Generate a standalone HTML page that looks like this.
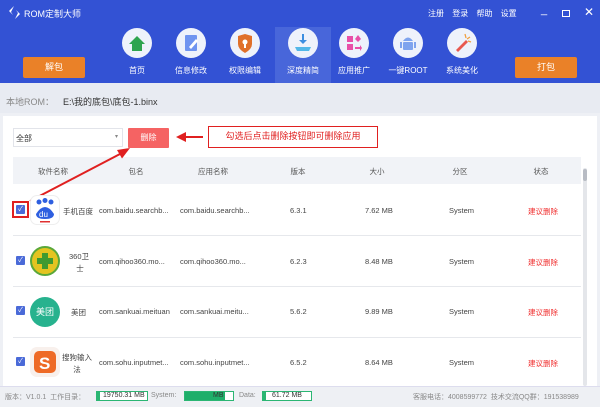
<!DOCTYPE html>
<html><head><meta charset="utf-8"><style>
*{margin:0;padding:0;box-sizing:border-box}
body{width:600px;height:407px;overflow:hidden;font-family:"Liberation Sans","Noto Sans CJK SC",sans-serif;font-size:8px;color:#333;background:#eef0f5;position:relative}
.a{position:absolute}
.hdr{left:0;top:0;width:600px;height:83px;background:#3352d4}
.nav{width:54px;text-align:center;color:#fff;font-size:8px}
.nav .c{width:30px;height:30px;border-radius:50%;background:#eef2fb;margin:0 auto 7px;position:relative;overflow:hidden}
.btn{background:#ea8128;color:#fff;text-align:center;border-radius:2px;font-size:9px}
.th{color:#555;font-size:7.5px;text-align:center}
.cell{font-size:7.5px;color:#444;white-space:nowrap}
.cb{width:9px;height:9px;background:#4a6ad8;border-radius:1px;color:#fff;font-size:7px;line-height:9px;text-align:center}
.ic{width:30px;height:30px;border-radius:7px}
</style></head><body>
<div class="a hdr"></div>
<div class="a" style="left:8px;top:6px;width:13px;height:13px;">
<svg width="13" height="13" viewBox="0 0 13 13"><path d="M6 0 L1 5 L5 9 L3 6 Z" fill="#fff"/><path d="M7 13 L12 8 L8 4 L10 7 Z" fill="#fff"/></svg></div>
<div class="a" style="left:24px;top:7px;color:#fff;font-size:9px">ROM定制大师</div>
<div class="a" style="left:428px;top:8px;color:#fff;font-size:8px;word-spacing:6px">注册 登录 帮助 设置</div>
<div class="a" style="left:541px;top:4px;color:#fff;font-size:11px">_</div>
<div class="a" style="left:562px;top:10px;width:8px;height:7px;border:1.5px solid #fff"></div>
<div class="a" style="left:584px;top:5px;color:#fff;font-size:12px">✕</div>
<div class="a" style="left:275px;top:27px;width:56px;height:56px;background:#4866da"></div>
<div class="a btn" style="left:23px;top:57px;width:62px;height:21px;line-height:21px">解包</div>
<div class="a btn" style="left:515px;top:57px;width:62px;height:21px;line-height:21px">打包</div>
<div class="a nav" style="left:110px;top:28px"><div class="c"><svg width="30" height="30"><path d="M7 16 L15 8 L23 16 L20 16 L20 23 L10 23 L10 16 Z" fill="#2ea44f"/></svg></div>首页</div>
<div class="a nav" style="left:164px;top:28px"><div class="c"><svg width="30" height="30"><rect x="9" y="7" width="12" height="16" rx="1" fill="#6f94f0"/><path d="M13 19 L20 11 L22 13 L15 21 Z" fill="#fff"/></svg></div>信息修改</div>
<div class="a nav" style="left:218px;top:28px"><div class="c"><svg width="30" height="30"><path d="M8 8 L15 6 L22 8 L22 16 Q22 21 15 25 Q8 21 8 16Z" fill="#e0702a"/><circle cx="15" cy="14" r="2.5" fill="#fff"/><rect x="14" y="15" width="2" height="5" fill="#fff"/></svg></div>权限编辑</div>
<div class="a nav" style="left:276px;top:28px"><div class="c"><svg width="30" height="30"><rect x="14" y="6" width="2" height="8" fill="#3c8ee0"/><path d="M11 12 L15 16 L19 12Z" fill="#3c8ee0"/><path d="M7 19 L23 19 L21 23 L9 23Z" fill="#52b7e8"/></svg></div>深度精简</div>
<div class="a nav" style="left:327px;top:28px"><div class="c"><svg width="30" height="30"><rect x="8" y="8" width="6" height="6" fill="#e84fa8"/><rect x="8" y="16" width="6" height="6" fill="#e84fa8"/><path d="M19 7 L22 11 L19 14 L16 11Z" fill="#e84fa8"/><path d="M16 19 L21 19 L21 17 L23 20 L21 23 L21 21 L16 21Z" fill="#e84fa8"/></svg></div>应用推广</div>
<div class="a nav" style="left:381px;top:28px"><div class="c"><svg width="30" height="30"><path d="M10 13 Q15 6 20 13Z" fill="#7fa4ee"/><rect x="10" y="14" width="10" height="8" rx="1" fill="#7fa4ee"/><rect x="7" y="14" width="2" height="6" fill="#7fa4ee"/><rect x="21" y="14" width="2" height="6" fill="#7fa4ee"/></svg></div>一键ROOT</div>
<div class="a nav" style="left:435px;top:28px"><div class="c"><svg width="30" height="30"><path d="M9 22 L19 12 L21 14 L11 24Z" fill="#e8584f"/><path d="M18 6 L19 10 M23 9 L20 11 M24 14 L21 13" stroke="#f0a040" stroke-width="1.3"/></svg></div>系统美化</div>

<div class="a" style="left:0;top:83px;width:600px;height:30px;background:#e8ebf2"></div>
<div class="a" style="left:6px;top:95px;color:#888;font-size:9px">本地ROM：</div>
<div class="a" style="left:63px;top:95px;color:#333;font-size:9px">E:\我的底包\底包-1.binx</div>
<div class="a" style="left:3px;top:116px;width:594px;height:270px;background:#fff"></div>

<div class="a" style="left:13px;top:128px;width:110px;height:19px;border:1px solid #e2e4ea;background:#fff"></div>
<div class="a" style="left:16px;top:133px;font-size:8px">全部</div>
<div class="a" style="left:115px;top:133px;font-size:6px;color:#888">▾</div>
<div class="a" style="left:128px;top:128px;width:41px;height:20px;background:#f56363;color:#fff;text-align:center;line-height:20px;font-size:8px;border-radius:1px">删除</div>
<div class="a" style="left:208px;top:126px;width:170px;height:22px;border:1.5px solid #e02020;color:#e02020;font-size:9px;line-height:19px;text-align:center">勾选后点击删除按钮即可删除应用</div>

<div class="a" style="left:13px;top:157px;width:568px;height:27px;background:#f1f3f7"></div>
<div class="a th" style="left:23px;top:166px;width:60px">软件名称</div>
<div class="a th" style="left:116px;top:166px;width:40px">包名</div>
<div class="a th" style="left:188px;top:166px;width:50px">应用名称</div>
<div class="a th" style="left:278px;top:166px;width:40px">版本</div>
<div class="a th" style="left:357px;top:166px;width:40px">大小</div>
<div class="a th" style="left:440px;top:166px;width:40px">分区</div>
<div class="a th" style="left:521px;top:166px;width:40px">状态</div>
<div class="a" style="left:583px;top:168px;width:4px;height:218px;background:#e4e6ea;border-radius:2px"></div>
<div class="a" style="left:583px;top:169px;width:4px;height:12px;background:#b8bcc4;border-radius:2px"></div>

<div class="a" style="left:13px;top:235px;width:568px;height:1px;background:#e6e8ec"></div>
<div class="a" style="left:13px;top:286px;width:568px;height:1px;background:#e6e8ec"></div>
<div class="a" style="left:13px;top:337px;width:568px;height:1px;background:#e6e8ec"></div>

<svg class="a" style="left:0;top:0" width="600" height="407"><path d="M203 137 L182 137" stroke="#e02020" stroke-width="2"/><path d="M176 137 L186 132 L186 142Z" fill="#e02020"/><path d="M30 201 L120 154" stroke="#e02020" stroke-width="2"/><path d="M130 148 L122 158.5 L117 150Z" fill="#e02020"/></svg>

<div class="a" style="left:12px;top:201px;width:17px;height:17px;border:2px solid #e02020"></div>
<div class="a cb" style="left:16px;top:205px">✓</div>
<div class="a cb" style="left:16px;top:256px">✓</div>
<div class="a cb" style="left:16px;top:306px">✓</div>
<div class="a cb" style="left:16px;top:357px">✓</div>

<div class="a ic" style="left:30px;top:195px;background:#fff;border:1px solid #eee"><svg width="28" height="28"><circle cx="8" cy="6" r="2.5" fill="#2e5fe0"/><circle cx="14" cy="4.5" r="2.5" fill="#2e5fe0"/><circle cx="20" cy="6" r="2.5" fill="#2e5fe0"/><path d="M5 18 Q14 4 23 18 Q23 23 14 23 Q5 23 5 18Z" fill="#2e5fe0"/><text x="8" y="21" font-size="8" fill="#fff" font-family="Liberation Sans">du</text><rect x="9" y="25" width="10" height="1.5" fill="#e03030"/></svg></div>
<div class="a" style="left:30px;top:246px;width:30px;height:30px;border-radius:50%;background:#e4c420;border:2px solid #5aa83a"><svg width="26" height="26"><path d="M10 5 h6 v5 h5 v6 h-5 v5 h-6 v-5 h-5 v-6 h5z" fill="#3e9a30"/></svg></div>
<div class="a" style="left:30px;top:297px;width:30px;height:30px;border-radius:50%;background:#27b28e;color:#fff;font-size:9px;line-height:30px;text-align:center">美团</div>
<div class="a ic" style="left:30px;top:347px;background:#f8f0ec"><svg width="30" height="30"><rect x="4" y="4" width="22" height="22" rx="5" fill="#ee6a26"/><text x="9" y="22" font-size="17" font-weight="bold" fill="#fff" font-family="Liberation Sans">S</text></svg></div>

<div class="a cell" style="left:63px;top:206px">手机百度</div>
<div class="a cell" style="left:69px;top:251px;text-align:center;line-height:12px">360卫<br>&nbsp;士</div>
<div class="a cell" style="left:71px;top:307px">美团</div>
<div class="a cell" style="left:62px;top:352px;line-height:12px;text-align:center">搜狗输入<br>法</div>

<div class="a cell" style="left:99px;top:206px">com.baidu.searchb...</div>
<div class="a cell" style="left:99px;top:257px">com.qihoo360.mo...</div>
<div class="a cell" style="left:99px;top:307px">com.sankuai.meituan</div>
<div class="a cell" style="left:99px;top:358px">com.sohu.inputmet...</div>
<div class="a cell" style="left:180px;top:206px">com.baidu.searchb...</div>
<div class="a cell" style="left:180px;top:257px">com.qihoo360.mo...</div>
<div class="a cell" style="left:180px;top:307px">com.sankuai.meitu...</div>
<div class="a cell" style="left:180px;top:358px">com.sohu.inputmet...</div>
<div class="a cell" style="left:290px;top:206px">6.3.1</div>
<div class="a cell" style="left:290px;top:257px">6.2.3</div>
<div class="a cell" style="left:290px;top:307px">5.6.2</div>
<div class="a cell" style="left:290px;top:358px">6.5.2</div>
<div class="a cell" style="left:365px;top:206px">7.62 MB</div>
<div class="a cell" style="left:365px;top:257px">8.48 MB</div>
<div class="a cell" style="left:365px;top:307px">9.89 MB</div>
<div class="a cell" style="left:365px;top:358px">8.64 MB</div>
<div class="a cell" style="left:449px;top:206px">System</div>
<div class="a cell" style="left:449px;top:257px">System</div>
<div class="a cell" style="left:449px;top:307px">System</div>
<div class="a cell" style="left:449px;top:358px">System</div>
<div class="a cell" style="left:528px;top:206px;color:#f03030">建议删除</div>
<div class="a cell" style="left:528px;top:257px;color:#f03030">建议删除</div>
<div class="a cell" style="left:528px;top:307px;color:#f03030">建议删除</div>
<div class="a cell" style="left:528px;top:358px;color:#f03030">建议删除</div>

<div class="a" style="left:0;top:386px;width:600px;height:21px;background:#eef0f4;border-top:1px solid #dde"></div>
<div class="a" style="left:5px;top:392px;font-size:7px;color:#888">版本：V1.0.1 &nbsp;工作目录：</div>
<div class="a" style="left:96px;top:391px;width:52px;height:10px;border:1px solid #2bb673;font-size:7px;line-height:8px;background:linear-gradient(90deg,#2bb673 0 3px,#fff 3px);padding-left:6px;color:#333">19750.31 MB</div>
<div class="a" style="left:151px;top:392px;font-size:7px;color:#888">System:</div>
<div class="a" style="left:184px;top:391px;width:50px;height:10px;border:1px solid #2bb673;background:linear-gradient(90deg,#1fae6a 0 40px,#fff 40px);font-size:7px;line-height:8px;color:#333;padding-left:28px">MB</div>
<div class="a" style="left:239px;top:392px;font-size:7px;color:#888">Data:</div>
<div class="a" style="left:262px;top:391px;width:50px;height:10px;border:1px solid #2bb673;background:linear-gradient(90deg,#2bb673 0 3px,#fff 3px);font-size:7px;line-height:8px;color:#333;padding-left:9px">61.72 MB</div>
<div class="a" style="left:413px;top:392px;font-size:7px;color:#888">客服电话：4008599772 &nbsp;技术交流QQ群：191538989</div>
</body></html>
